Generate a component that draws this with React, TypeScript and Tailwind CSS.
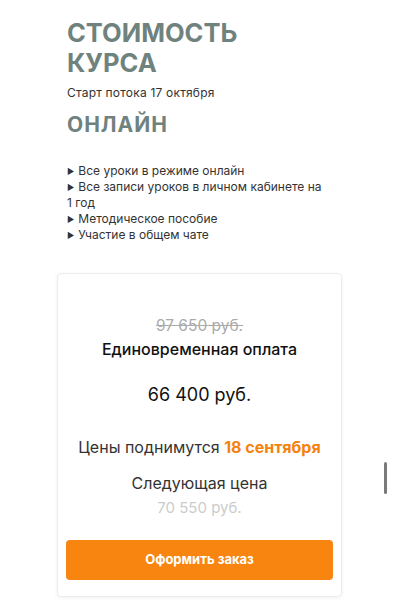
import React from "react";

export default function App() {
  const bullets = [
    "Все уроки в режиме онлайн",
    "Все записи уроков в личном кабинете на 1 год",
    "Методическое пособие",
    "Участие в общем чате",
  ];
  return (
    <div className="relative w-[400px] h-[600px] overflow-hidden bg-white" style={{ fontFamily: "Inter, 'Noto Sans', sans-serif" }}>
      <div className="pl-[67px] pr-[50px] pt-[18px]">
        <h1 className="text-[25.5px] leading-[30px] font-bold text-[#6f827e]">
          СТОИМОСТЬ
          <br />
          КУРСА
        </h1>
        <p className="mt-[7px] text-[12px] leading-[15px] tracking-[0.2px] text-[#333]">Старт потока 17 октября</p>
        <h2 className="mt-[13px] text-[21px] leading-[24px] font-bold tracking-[1px] text-[#6f827e]">ОНЛАЙН</h2>
        <ul className="mt-[26px] text-[12px] leading-[16px] text-[#333] w-[262px]">
          {bullets.map((b) => (
            <li key={b}>
              <span className="text-[8px] leading-[0] align-[1px] mr-[4px]">►</span>
              {b}
            </li>
          ))}
        </ul>
      </div>
      <div className="ml-[57px] mt-[30px] w-[285px] h-[324px] rounded-[4px] border border-[#ececec] shadow-[0_1px_4px_rgba(0,0,0,0.06)] flex flex-col items-center pt-[42px] px-[9px]">
        <div className="text-[15.5px] leading-[20px] text-[#aaa] line-through">97 650 руб.</div>
        <div className="mt-[3px] text-[16px] leading-[20px] font-medium text-[#111]">Единовременная оплата</div>
        <div className="mt-[25px] text-[18px] leading-[22px] text-[#111]">66 400 руб.</div>
        <div className="mt-[30px] text-[16px] leading-[22px] text-[#333]">
          Цены поднимутся <span className="font-bold text-[#f5820f]">18 сентября</span>
        </div>
        <div className="mt-[14px] text-[16px] leading-[22px] text-[#333]">Следующая цена</div>
        <div className="mt-[4px] text-[15px] leading-[20px] text-[#ccc]">70 550 руб.</div>
        <button className="mt-[22px] w-[267px] h-[40px] rounded-[4px] bg-[#f7850f] text-white text-[13px] font-bold">
          Оформить заказ
        </button>
      </div>
      <div className="absolute left-[384px] top-[462px] w-[3px] h-[32px] rounded-full bg-[#7a7a7a]" />
    </div>
  );
}
